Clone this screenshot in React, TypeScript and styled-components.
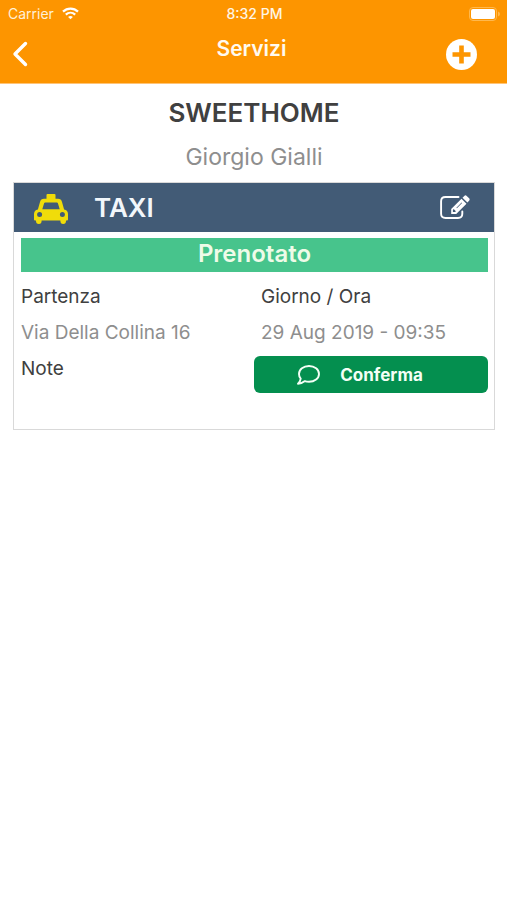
import React from "react";
import styled, { createGlobalStyle } from "styled-components";

const GlobalStyle = createGlobalStyle`
  * { box-sizing: border-box; }
  body {
    margin: 0;
    background: #fff;
    color: #404040;
    font-family: Inter, "Liberation Sans", sans-serif;
  }
`;

const Header = styled.header`
  height: 84px;
  color: #fff;
  background: #fd9500;
  border-bottom: 1px solid #ffc477;
`;

const StatusBar = styled.div`
  display: grid;
  grid-template-columns: 1fr auto 1fr;
  align-items: center;
  height: 27px;
  padding: 0 6px 0 8px;
  font-size: 14px;
`;

const Carrier = styled.span`
  display: flex;
  align-items: center;
  gap: 8px;
  color: #fff0d8;
`;

const Clock = styled.time`
  font-weight: 500;
  color: #fff6e6;
`;

const Battery = styled.span`
  display: flex;
  justify-content: flex-end;
`;

const NavBar = styled.nav`
  display: grid;
  grid-template-columns: 1fr auto 1fr;
  height: 54px;
  padding: 0 14px 0 10px;
`;

const IconButton = styled.button`
  display: flex;
  align-items: center;
  justify-self: start;
  padding: 0;
  border: 0;
  background: none;
  color: #fff;
  cursor: pointer;
`;

const AddButton = styled(IconButton)`
  justify-self: end;
  margin-right: 16px;
`;

const NavTitle = styled.h1`
  margin: 0;
  font-size: 21px;
  line-height: 44px;
  font-weight: 600;
  color: #fffaf0;
`;

const Main = styled.main`
  padding: 12px 12px 0 13px;
`;

const Place = styled.h2`
  margin: 0;
  text-align: center;
  font-size: 26px;
  line-height: 34px;
  font-weight: 600;
`;

const Guest = styled.p`
  margin: 12px 0 9px;
  text-align: center;
  font-size: 23px;
  line-height: 31px;
  color: #8e8e8e;
`;

const Card = styled.article`
  border: 1px solid #d9d9d9;
  padding-bottom: 36px;
`;

const CardHeader = styled.header`
  display: flex;
  align-items: center;
  height: 49px;
  padding: 0 24px 0 20px;
  gap: 26px;
  color: #f2f7fb;
  background: #425b76;
`;

const CardTitle = styled.h3`
  flex: 1;
  margin: 0;
  font-size: 26px;
  line-height: 50px;
  font-weight: 600;
`;

const Status = styled.div`
  margin: 6px 6px 7px 7px;
  height: 34px;
  text-align: center;
  font-size: 24px;
  line-height: 32px;
  font-weight: 600;
  color: #effbe8;
  background: #47c48c;
`;

const Details = styled.div`
  display: grid;
  grid-template-columns: 1fr 1fr;
`;

const Field = styled.dl`
  margin: 0;
  padding-left: 7px;
  font-size: 19px;
  line-height: 36px;
`;

const Label = styled.dt`
  color: #404040;
`;

const Value = styled.dd`
  margin: 0;
  color: #8e8e8e;
`;

const ConfirmButton = styled.button`
  display: flex;
  align-items: center;
  justify-content: center;
  gap: 20px;
  height: 37px;
  margin: 5px 6px 0 0;
  padding: 0 22px 0 0;
  border: 0;
  border-radius: 6px;
  font: 700 17px/24px Inter, "Liberation Sans", sans-serif;
  color: #f4fff6;
  background: #048f4f;
  cursor: pointer;
`;

const WifiIcon = () => (
  <svg width="17" height="13" viewBox="0 0 17 13" fill="none" stroke="#fff" strokeWidth="2.2" aria-hidden="true">
    <path d="M1 4.6C5.2.5 11.8.5 16 4.6" />
    <path d="M3.8 7.6c2.7-2.5 6.7-2.5 9.4 0" />
    <path d="M8.5 12.3 6.1 9.900c1.400-1.200 3.400-1.200 4.800 0z" fill="#fff" stroke="none" />
  </svg>
);

const BatteryIcon = () => (
  <svg width="32" height="14" viewBox="0 0 32 14" aria-hidden="true">
    <rect x=".5" y=".5" width="27" height="13" rx="3.5" fill="none" stroke="#ffb84d" />
    <rect x="2" y="2" width="24" height="10" rx="2" fill="#fff" />
    <path d="M29 4.5q2 .8 2 2.5t-2 2.5z" fill="#ffb84d" />
  </svg>
);

const BackIcon = () => (
  <svg width="20" height="26" viewBox="0 0 20 26" fill="none" stroke="currentColor" strokeWidth="3.4" strokeLinecap="round" strokeLinejoin="round" aria-hidden="true">
    <path d="M15.5 2.5 5 13l10.5 10.5" />
  </svg>
);

const AddIcon = () => (
  <svg width="31" height="31" viewBox="0 0 31 31" aria-hidden="true">
    <circle cx="15.5" cy="15.5" r="15.5" fill="currentColor" />
    <path d="M15.5 6.5v18M6.5 15.5h18" stroke="#fd9500" strokeWidth="4.6" />
  </svg>
);

const TaxiIcon = () => (
  <svg width="34" height="32" viewBox="0 -2 34 32" fill="#f0dc0a" aria-hidden="true">
    <path
      fillRule="evenodd"
      d="M12.500 1q0-1 1-1h7q1 0 1 1v3.800h2.500q3.200 0 4 3.200l2.100 7.400Q34 16.200 34 20v5.500q0 1-1 1h-1v.6q0 2.900-2.800 2.900t-2.800-2.900v-.6H7.600v.6q0 2.900-2.800 2.900T2 27.100v-.6H1q-1 0-1-1V20q0-3.800 3.900-4.600L6 8q.8-3.200 4-3.200h2.500zM11.200 8.500q-.9 0-1.100.8L8.300 15.300h17.400l-1.800-6q-.2-.8-1.100-.8zM5.600 17.900a2.500 2.500 0 1 0 0 5 2.500 2.500 0 0 0 0-5zM28.400 17.900a2.500 2.500 0 1 0 0 5 2.500 2.500 0 0 0 0-5z"
    />
  </svg>
);

const EditIcon = () => (
  <svg width="30" height="25" viewBox="0 0 30 25" fill="none" stroke="currentColor" aria-hidden="true">
    <path d="M18.500 2H5.500Q1.100 2 1.100 6.200v12.600Q1.100 23 5.500 23H18Q22.300 23 22.300 18.800V16.500" strokeWidth="1.9" strokeLinecap="round" />
    <path fill="currentColor" fillRule="evenodd" stroke="none" d="m21.500 3.700 5 5L16.200 18.900h-5v-5zM12.900 14.900v2.200h2.200l.8-.9-2.200-2.200zM16.400 12.800l5.200-5.200.5.500-5.200 5.200zM22.500 2.700l1.800-1.800q1.200-1.100 2.400 0l2.400 2.400q1.100 1.200 0 2.400l-1.700 1.800z" />
  </svg>
);

const CommentIcon = () => (
  <svg width="23" height="20" viewBox="0 0 23 20" fill="none" stroke="currentColor" strokeWidth="1.9" strokeLinejoin="round" aria-hidden="true">
    <path d="M12 1c5.600 0 10 3.500 10 7.900s-4.400 7.900-10 7.900c-1.500 0-2.900-.2-4.100-.7C6 17.700 3.800 18.700 1 18.700c1.600-1.500 2.500-3.200 2.700-5C2.500 12.300 2 10.700 2 8.900 2 4.500 6.400 1 12 1z" />
  </svg>
);

export default function App() {
  return (
    <>
      <GlobalStyle />
      <Header>
        <StatusBar>
          <Carrier>Carrier <WifiIcon /></Carrier>
          <Clock>8:32 PM</Clock>
          <Battery><BatteryIcon /></Battery>
        </StatusBar>
        <NavBar>
          <IconButton type="button" aria-label="Indietro"><BackIcon /></IconButton>
          <NavTitle>Servizi</NavTitle>
          <AddButton type="button" aria-label="Aggiungi"><AddIcon /></AddButton>
        </NavBar>
      </Header>
      <Main>
        <Place>SWEETHOME</Place>
        <Guest>Giorgio Gialli</Guest>
        <Card>
          <CardHeader>
            <TaxiIcon />
            <CardTitle>TAXI</CardTitle>
            <IconButton type="button" aria-label="Modifica"><EditIcon /></IconButton>
          </CardHeader>
          <Status>Prenotato</Status>
          <Details>
            <Field>
              <Label>Partenza</Label>
              <Value>Via Della Collina 16</Value>
            </Field>
            <Field>
              <Label>Giorno / Ora</Label>
              <Value>29 Aug 2019 - 09:35</Value>
            </Field>
            <Field>
              <Label>Note</Label>
            </Field>
            <ConfirmButton type="button"><CommentIcon />Conferma</ConfirmButton>
          </Details>
        </Card>
      </Main>
    </>
  );
}
